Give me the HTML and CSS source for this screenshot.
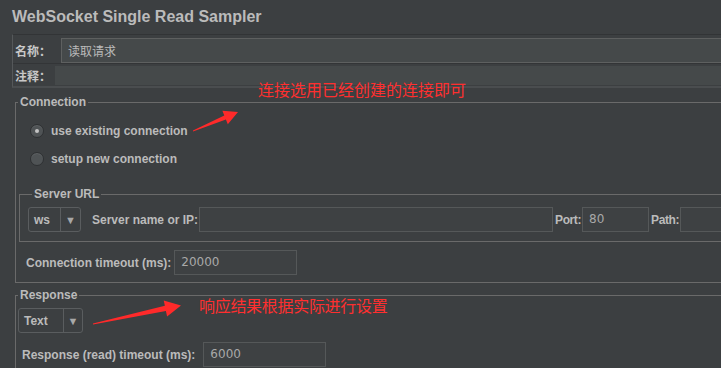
FILE: index.html
```html
<!DOCTYPE html>
<html lang="zh-CN">
<head>
    <meta charset="UTF-8">
    <title>WebSocket Single Read Sampler</title>
    <link rel="stylesheet" href="styles.css">
</head>
<body>
<div class="page">
    <div class="title">WebSocket Single Read Sampler</div>

    <div class="name-panel">
        <div class="name-row">
            <span class="cn-label">名称：</span>
            <div class="name-input">读取请求</div>
        </div>
        <div class="comment-row">
            <span class="cn-label">注释：</span>
            <div class="comment-input"></div>
        </div>
    </div>

    <fieldset class="group connection">
        <legend>Connection</legend>
        <div class="radio-row">
            <span class="radio checked"></span>
            <span>use existing connection</span>
        </div>
        <div class="radio-row">
            <span class="radio"></span>
            <span>setup new connection</span>
        </div>

        <fieldset class="group server-url">
            <legend>Server URL</legend>
            <div class="url-row">
                <div class="combo combo-ws">
                    <span class="combo-value">ws</span>
                    <span class="combo-arrow">▼</span>
                </div>
                <span class="url-label">Server name or IP:</span>
                <div class="field field-server"></div>
                <span class="short-label">Port:</span>
                <div class="field field-port">80</div>
                <span class="short-label">Path:</span>
                <div class="field field-path"></div>
            </div>
        </fieldset>

        <div class="timeout-row conn-timeout">
            <span>Connection timeout (ms):</span>
            <div class="field field-timeout">20000</div>
        </div>
    </fieldset>

    <fieldset class="group response">
        <legend>Response</legend>
        <div class="combo combo-text">
            <span class="combo-value">Text</span>
            <span class="combo-arrow">▼</span>
        </div>
        <div class="timeout-row read-timeout">
            <span>Response (read) timeout (ms):</span>
            <div class="field field-timeout">6000</div>
        </div>
    </fieldset>

    <!-- 标注 -->
    <div class="note note-connection">连接选用已经创建的连接即可</div>
    <div class="note note-response">响应结果根据实际进行设置</div>
    <svg class="arrows" width="721" height="368" viewBox="0 0 721 368">
        <polygon points="193,131.6 225.9,119.4 227.8,124.2 238,112 222.4,110.7 224.3,115.4 193,130.4" />
        <polygon points="93,324.6 165.9,311 167.1,316.6 181,305.5 163.7,300.4 164.9,305.7 93,323.4" />
    </svg>
</div>
</body>
</html>
```

FILE: styles.css
```css
/* 重置默认样式 */
* {
    margin: 0;
    padding: 0;
    box-sizing: border-box;
}
body {
    background: #3c3f41;
    color: #bbbbbb;
    font-family: "Liberation Sans", Arial, "Noto Sans CJK SC", sans-serif;
    font-size: 12px;
    font-weight: bold;
    overflow: hidden;
}
.page {
    position: relative;
    width: 721px;
    height: 368px;
    overflow: hidden;
}
.title {
    height: 34px;
    padding: 7px 0 0 12px;
    font-size: 16px;
    line-height: 20px;
}

/* 名称/注释 */
.name-panel {
    margin-left: 12px;
    border-top: 1px solid #323436;
    border-left: 1px solid #55585a;
    border-bottom: 2px solid #4a4d4f;
}
.cn-label {
    font-family: "Noto Sans CJK SC", sans-serif;
    font-size: 12px;
    font-weight: bold;
    padding-left: 2px;
    color: #c8c8c8;
}
.name-row {
    display: flex;
    align-items: center;
    height: 29px;
    padding-top: 2px;
    border-bottom: 1px solid #333537;
}
.name-input {
    margin-left: 10px;
    flex: 1;
    height: 25px;
    line-height: 23px;
    padding-left: 6px;
    background: #45494a;
    border: 1px solid #5e6060;
    border-right: none;
    font-family: "Noto Sans CJK SC", sans-serif;
    font-weight: normal;
    font-size: 12px;
}
.comment-row {
    display: flex;
    align-items: center;
    height: 22px;
}
.comment-input {
    margin-left: 4px;
    flex: 1;
    height: 19px;
    background: #45494a;
}

/* 分组框 */
.group {
    border: 1px solid #6a6a6a;
    border-right: none;
    min-width: 0;
}
.group legend {
    margin-left: 2px;
    padding: 0 2px;
    line-height: 14px;
    font-size: 12px;
}
.connection {
    margin: 7px 0 0 15px;
    padding: 8px 0 7px 0;
}
.radio-row {
    display: flex;
    align-items: center;
    gap: 7px;
    height: 28px;
    padding-left: 14px;
}
.radio {
    flex-shrink: 0;
    width: 14px;
    height: 14px;
    border-radius: 50%;
    background: #4f5355;
    border: 1px solid #2e3032;
    box-shadow: inset 0 1px 0 #5e6264;
    position: relative;
}
.radio.checked::after {
    content: '';
    position: absolute;
    left: 4px;
    top: 4px;
    width: 4px;
    height: 4px;
    border-radius: 50%;
    background: #c4c4c4;
}
.server-url {
    margin: 14px 0 0 3px;
    padding: 6px 0 9px 8px;
}
.server-url legend {
    margin-left: 4px;
}
.url-row {
    display: flex;
    align-items: center;
    gap: 2px;
    white-space: nowrap;
}
.url-row > * {
    flex-shrink: 0;
}
.url-label {
    margin-left: 9px;
    margin-right: -1px;
}
.short-label {
    letter-spacing: -0.4px;
    margin-right: -1px;
}
.combo {
    display: flex;
    height: 25px;
    border: 1px solid #5a5d5f;
    border-radius: 3px;
    background: #3c3f41;
}
.combo-value {
    display: flex;
    align-items: center;
    padding-left: 5px;
    border-right: 1px solid #5a5d5f;
}
.combo-arrow {
    display: flex;
    align-items: center;
    justify-content: center;
    font-size: 11px;
    color: #a8a8a8;
}
.combo-ws {
    width: 53px;
}
.combo-ws .combo-value {
    width: 32px;
}
.combo-ws .combo-arrow {
    width: 19px;
}
.combo-text {
    width: 65px;
    margin-left: 2px;
    margin-top: 6px;
}
.combo-text .combo-value {
    width: 45px;
    font-size: 12px;
}
.combo-text .combo-arrow {
    width: 18px;
}
.field {
    height: 25px;
    line-height: 23px;
    padding-left: 6px;
    border: 1px solid #555859;
    background: #3e4143;
    font-weight: normal;
    font-size: 12px;
    color: #a9a9a9;
    font-family: "DejaVu Sans", sans-serif;
}
.field-server {
    width: 354px;
}
.field-port {
    width: 67px;
}
.field-path {
    width: 60px;
}
.field-timeout {
    width: 123px;
}
.timeout-row {
    display: flex;
    align-items: center;
    gap: 3px;
    white-space: nowrap;
}
.conn-timeout {
    margin-top: 8px;
    padding-left: 10px;
}
.response {
    margin: 5px 0 0 15px;
    padding: 0 0 10px 0;
}
.read-timeout {
    margin-top: 9px;
    padding-left: 6px;
    gap: 8px;
}

/* 红色标注 */
.note {
    position: absolute;
    font-family: "Noto Sans CJK SC", sans-serif;
    font-weight: normal;
    font-size: 16px;
    line-height: 16px;
    color: #ff2f2f;
    white-space: nowrap;
}
.note-connection {
    left: 258px;
    top: 81px;
}
.note-response {
    left: 199px;
    top: 297px;
    letter-spacing: -0.3px;
}
.arrows {
    position: absolute;
    left: 0;
    top: 0;
    pointer-events: none;
}
.arrows polygon {
    fill: #ff2a2a;
}
```
